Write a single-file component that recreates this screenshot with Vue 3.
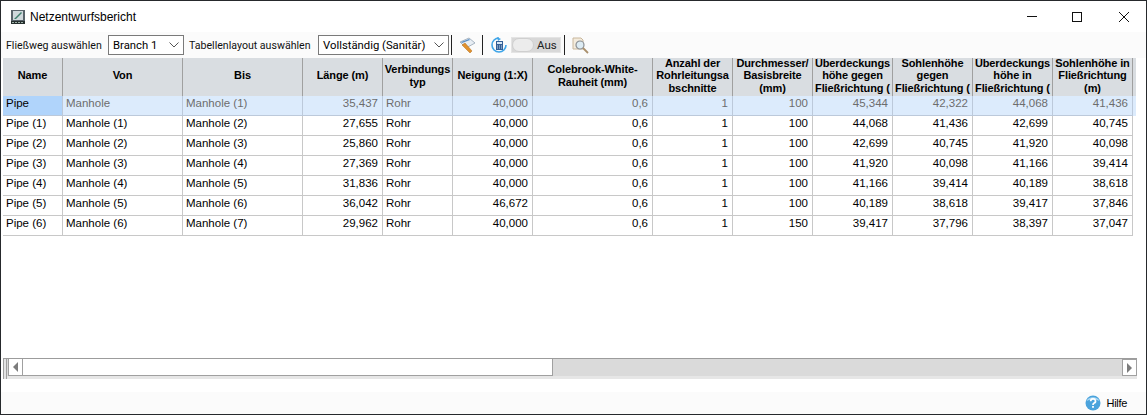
<script setup>
const columns = [
  { w: 60, lines: ['Name'] },
  { w: 120, lines: ['Von'] },
  { w: 120, lines: ['Bis'] },
  { w: 80, lines: ['Länge (m)'] },
  { w: 70, lines: ['Verbindungs', 'typ'] },
  { w: 80, lines: ['Neigung (1:X)'] },
  { w: 120, lines: ['Colebrook-White-', 'Rauheit (mm)'] },
  { w: 80, lines: ['Anzahl der', 'Rohrleitungsa', 'bschnitte'] },
  { w: 80, lines: ['Durchmesser/', 'Basisbreite', '(mm)'] },
  { w: 80, lines: ['Überdeckungs', 'höhe gegen', 'Fließrichtung ('] },
  { w: 80, lines: ['Sohlenhöhe', 'gegen', 'Fließrichtung ('] },
  { w: 80, lines: ['Überdeckungs', 'höhe in', 'Fließrichtung ('] },
  { w: 80, lines: ['Sohlenhöhe in', 'Fließrichtung', '(m)'] },
]
const align = ['l', 'l', 'l', 'r', 'l', 'r', 'r', 'r', 'r', 'r', 'r', 'r', 'r']
const rows = [
  ['Pipe', 'Manhole', 'Manhole (1)', '35,437', 'Rohr', '40,000', '0,6', '1', '100', '45,344', '42,322', '44,068', '41,436'],
  ['Pipe (1)', 'Manhole (1)', 'Manhole (2)', '27,655', 'Rohr', '40,000', '0,6', '1', '100', '44,068', '41,436', '42,699', '40,745'],
  ['Pipe (2)', 'Manhole (2)', 'Manhole (3)', '25,860', 'Rohr', '40,000', '0,6', '1', '100', '42,699', '40,745', '41,920', '40,098'],
  ['Pipe (3)', 'Manhole (3)', 'Manhole (4)', '27,369', 'Rohr', '40,000', '0,6', '1', '100', '41,920', '40,098', '41,166', '39,414'],
  ['Pipe (4)', 'Manhole (4)', 'Manhole (5)', '31,836', 'Rohr', '40,000', '0,6', '1', '100', '41,166', '39,414', '40,189', '38,618'],
  ['Pipe (5)', 'Manhole (5)', 'Manhole (6)', '36,042', 'Rohr', '46,672', '0,6', '1', '100', '40,189', '38,618', '39,417', '37,846'],
  ['Pipe (6)', 'Manhole (6)', 'Manhole (7)', '29,962', 'Rohr', '40,000', '0,6', '1', '150', '39,417', '37,796', '38,397', '37,047'],
]
const gridTemplate = columns.map((c) => c.w + 'px').join(' ')
</script>

<template>
  <div class="window">
    <header class="titlebar">
      <svg class="appicon" width="16" height="16" viewBox="0 0 16 16">
        <rect x="1" y="1" width="14" height="14" fill="#59636b" />
        <rect x="3" y="2" width="10" height="9" fill="#cfd8dc" />
        <path d="M4 10 L11 3 L12 4 L6 10 Z" fill="#3f7f6e" />
        <rect x="1" y="12" width="14" height="3" fill="#26302f" />
        <path d="M2 13.5 H14" stroke="#9fb0a8" stroke-width="1" stroke-dasharray="2 1" />
      </svg>
      <span class="title">Netzentwurfsbericht</span>
      <div class="winbtns">
        <svg class="wb" width="46" height="12" viewBox="0 0 46 12"><path d="M18 5.5 H28" stroke="#111" /></svg>
        <svg class="wb" width="46" height="12" viewBox="0 0 46 12"><rect x="17.5" y="1.5" width="9" height="9" fill="none" stroke="#111" /></svg>
        <svg class="wb" width="46" height="12" viewBox="0 0 46 12"><path d="M18 1 L28 11 M28 1 L18 11" stroke="#111" /></svg>
      </div>
    </header>

    <div class="toolbar">
      <label class="lbl">Fließweg auswählen</label>
      <div class="combo branch"><span>Branch 1</span><svg width="10" height="6" viewBox="0 0 10 6"><path d="M0.5 0.5 L5 5 L9.5 0.5" fill="none" stroke="#555" /></svg></div>
      <label class="lbl second">Tabellenlayout auswählen</label>
      <div class="combo layout"><span>Vollständig (Sanitär)</span><svg width="10" height="6" viewBox="0 0 10 6"><path d="M0.5 0.5 L5 5 L9.5 0.5" fill="none" stroke="#555" /></svg></div>
      <i class="sep"></i>
      <svg class="tool t1" width="17" height="17" viewBox="0 0 17 17">
        <path d="M1 5 L10 1 L16 6 L7 11 Z" fill="#e8eef4" stroke="#8899aa" stroke-width=".7" />
        <path d="M2 5 L10 2 L11 3 L3 6 Z" fill="#5a8fc8" />
        <path d="M3 8 L6 6 L13 14 L11 16 Z" fill="#e0912e" stroke="#b06a18" stroke-width=".5" />
      </svg>
      <i class="sep"></i>
      <svg class="tool t2" width="16" height="16" viewBox="0 0 16 16">
        <path d="M8 1 A7 7 0 1 0 15 8" fill="none" stroke="#3fa5e8" stroke-width="1.6" />
        <path d="M6 0 L10 2 L7 4 Z" fill="#3fa5e8" />
        <rect x="5" y="4" width="7" height="9" fill="#345f96" />
        <rect x="6" y="5" width="5" height="2" fill="#d6e6f5" />
        <path d="M6 9 H11 M6 11 H11" stroke="#c5d8ea" stroke-dasharray="1 1" />
      </svg>
      <div class="toggle"><i class="knob"></i><span>Aus</span></div>
      <i class="sep sep-last"></i>
      <svg class="tool t3" width="17" height="18" viewBox="0 0 17 18">
        <path d="M1 2 H9 L11 4 V13 H1 Z" fill="#f3ebdd" stroke="#c9b79c" />
        <circle cx="8" cy="9" r="4" fill="#dcebf3" stroke="#8a8f94" stroke-width="1.2" />
        <path d="M11 12 L16 17" stroke="#a98f6d" stroke-width="1.8" />
      </svg>
    </div>

    <div class="grid">
      <div class="head" :style="{ gridTemplateColumns: gridTemplate }">
        <div v-for="c in columns" :key="c.lines[0]" class="hcell">
          <div v-for="l in c.lines" :key="l" class="hline">{{ l }}</div>
        </div>
      </div>
      <div
        v-for="(r, ri) in rows"
        :key="r[0]"
        class="row"
        :class="{ selected: ri === 0 }"
        :style="{ gridTemplateColumns: gridTemplate }"
      >
        <div
          v-for="(v, ci) in r"
          :key="ci"
          class="cell"
          :class="[align[ci], { current: ri === 0 && ci === 0 }]"
        >{{ v }}</div>
      </div>
    </div>

    <div class="scrollbar">
      <div class="sb-grip"></div>
      <div class="sb-btn"><svg width="6" height="10" viewBox="0 0 6 10"><path d="M5 0 V10 L0 5 Z" fill="#7c7c7c" /></svg></div>
      <div class="sb-thumb"></div>
      <div class="sb-track"></div>
      <div class="sb-btn end"><svg width="6" height="10" viewBox="0 0 6 10"><path d="M0 0 V10 L5 5 Z" fill="#7c7c7c" /></svg></div>
    </div>

    <footer class="footer">
      <svg width="16" height="16" viewBox="0 0 16 16">
        <circle cx="8" cy="8" r="7.5" fill="#4ba3dc" />
        <path d="M1.5 6 A7 6 0 0 1 14.5 6 A10 6 0 0 0 1.5 6" fill="#a9d8f5" />
        <path d="M5.7 6.2 A2.4 2.2 0 1 1 8.8 8.2 Q8 8.7 8 10" fill="none" stroke="#fff" stroke-width="1.7" />
        <rect x="7.1" y="11" width="1.8" height="1.8" fill="#fff" />
      </svg>
      <span class="help">Hilfe</span>
    </footer>
  </div>
</template>

<style>
html, body { margin: 0; background: #fff; }
</style>

<style scoped>
.window {
  box-sizing: border-box;
  width: 1147px;
  height: 415px;
  display: flex;
  flex-direction: column;
  background: #fff;
  border: 1px solid #26292c;
  font-family: "Liberation Sans", Arial, sans-serif;
  font-size: 11.5px;
  color: #000;
  overflow: hidden;
}
.titlebar {
  height: 31px;
  display: flex;
  align-items: center;
  flex: none;
}
.appicon { margin-left: 9px; }
.title { margin-left: 4px; font-size: 12px; }
.winbtns { margin-left: auto; display: flex; margin-right: -1px; }
.wb { display: block; }
.toolbar {
  height: 26px;
  flex: none;
  background: #fbfbfb;
  display: flex;
  align-items: center;
  padding-left: 5px;
  font-family: Roboto, "Liberation Sans", sans-serif;
}
.lbl { white-space: nowrap; width: 97px; flex: none; font-size: 10.6px; color: #111; }
.lbl.second { margin-left: 5px; width: 123px; }
.combo {
  box-sizing: border-box;
  height: 20px;
  border: 1px solid #7a7a7a;
  background: #fff;
  display: flex;
  align-items: center;
  justify-content: space-between;
  padding: 0 4px 0 4px;
  white-space: nowrap;
  font-size: 11.3px;
  flex: none;
}
.branch { width: 76px; margin-left: 5px; }
.layout { width: 131px; margin-left: 6px; }
.sep { width: 1px; height: 20px; background: #222; display: block; margin-left: 2px; flex: none; }
.sep-last { margin-left: 3px; }
.tool { flex: none; display: block; }
.t1 { margin-left: 7px; margin-right: 4px; }
.t2 { margin-left: 8px; margin-right: 4px; }
.t3 { margin-left: 7px; }
.toggle {
  box-sizing: border-box;
  width: 50px;
  height: 16px;
  background: #d8d8d8;
  border: 1px solid #e4e4e4;
  display: flex;
  align-items: center;
  flex: none;
}
.knob {
  width: 22px;
  height: 14px;
  border-radius: 7px;
  background: #ececec;
  border: 1px solid #cfcfcf;
  box-sizing: border-box;
}
.toggle span { margin-left: 3px; color: #222; font-size: 11.5px; }
.grid {
  flex: 1;
  margin-left: 2px;
  min-height: 0;
}
.head {
  display: grid;
  height: 38px;
  width: 1133px;
  background: #d9dde1;
  overflow: hidden;
}
.hcell {
  box-sizing: border-box;
  height: 38px;
  padding-bottom: 3px;
  border-right: 1px solid #a0a0a0;
  display: flex;
  flex-direction: column;
  justify-content: center;
  align-items: center;
  font-weight: bold;
  font-size: 11px;
  letter-spacing: -0.1px;
  overflow: hidden;
  min-width: 0;
}
.hline { line-height: 12.6px; white-space: nowrap; }
.row { display: grid; height: 20px; }
.row.selected { background: #dcebfc; color: #6d6d6d; width: 1133px; }
.cell {
  box-sizing: border-box;
  height: 20px;
  line-height: 14px;
  padding: 0 4px 0 3px;
  border-right: 1px solid #c8c8c8;
  border-bottom: 1px solid #c8c8c8;
  white-space: nowrap;
  overflow: hidden;
}
.selected .cell { border-color: #bcc9da; }
.cell.r { text-align: right; }
.cell.current { background: #b0d4fb; color: #000; }
.scrollbar {
  flex: none;
  box-sizing: border-box;
  height: 21px;
  display: flex;
  margin-left: 2px;
  width: 1134px;
  background: #dadada;
  border-top: 1px solid #9c9c9c;
  border-bottom: 3px solid #e6e6e6;
}
.sb-grip {
  box-sizing: border-box;
  width: 4px;
  flex: none;
  background: #e4e4e4;
  border-right: 1px solid #a0a0a0;
  border-left: 1px solid #a0a0a0;
  margin-bottom: -3px;
}
.sb-btn {
  box-sizing: border-box;
  width: 15px;
  margin-left: 1px;
  border: 1px solid #a0a0a0;
  border-top: 0;
  background: #fff;
  display: flex;
  align-items: center;
  justify-content: center;
  flex: none;
}
.sb-btn.end { margin-left: 0; border-top: 1px solid #a0a0a0; }
.sb-thumb {
  width: 530px;
  box-sizing: border-box;
  background: #fff;
  border-bottom: 1px solid #a0a0a0;
  border-right: 1px solid #a0a0a0;
  flex: none;
}
.sb-track { flex: 1; }
.footer {
  flex: none;
  height: 22px;
  margin-top: 13px;
  background: #fbfbfb;
  display: flex;
  align-items: center;
  justify-content: flex-end;
  padding-right: 19px;
  gap: 5px;
}
.help { font-size: 11px; letter-spacing: -0.3px; }
</style>
